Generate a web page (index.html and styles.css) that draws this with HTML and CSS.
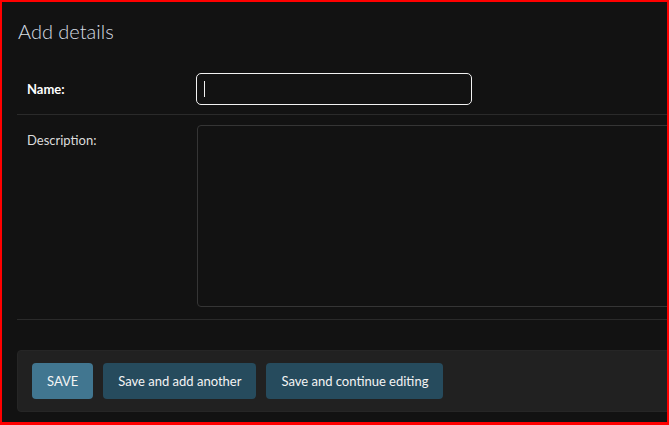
FILE: index.html
```html
<!DOCTYPE html>
<html lang="en">
<head>
<meta charset="utf-8">
<title>Add details</title>
<link rel="stylesheet" href="styles.css">
</head>
<body>
<div class="frame">
  <div class="content">
    <h1 class="title">Add details</h1>
    <form class="form">
      <fieldset class="module">
        <div class="form-row">
          <label class="required" for="id_name">Name:</label>
          <div class="input-wrap">
            <input class="name-input" type="text" id="id_name">
            <span class="caret"></span>
          </div>
        </div>
        <div class="form-row">
          <label for="id_description">Description:</label>
          <textarea class="desc-input" id="id_description"></textarea>
        </div>
      </fieldset>
      <div class="submit-row">
        <button type="button" class="btn btn-default">SAVE</button>
        <button type="button" class="btn">Save and add another</button>
        <button type="button" class="btn">Save and continue editing</button>
      </div>
    </form>
  </div>
</div>
</body>
</html>
```

FILE: styles.css
```css
* { box-sizing: border-box; }
html, body {
  margin: 0;
  padding: 0;
  background: #121212;
  overflow: hidden;
}
body {
  font-family: "Segoe UI", Lato, "Open Sans", sans-serif;
  font-size: 13px;
  color: #eeeeee;
}
.frame {
  width: 669px;
  height: 425px;
  border: 2px solid #ff0000;
  border-bottom-width: 3px;
  overflow: hidden;
  background: #121212;
}
.content {
  padding: 0 0 0 15px;
  width: 1000px;
}
.title {
  margin: 0;
  padding: 16px 0 0 1px;
  height: 60px;
  font-size: 20px;
  font-weight: 300;
  line-height: 26px;
  color: #d6dde2;
}
.module {
  margin: 0;
  padding: 0;
  border: 0;
}
.form-row {
  display: flex;
  align-items: flex-start;
  padding: 10px 10px;
  border-bottom: 1px solid #2a2a2a;
}
.form-row:last-child { padding-bottom: 12px; }
.form-row label {
  width: 170px;
  flex: 0 0 170px;
  padding-right: 10px;
  line-height: 16px;
  color: #dcdcdc;
}
.form-row label.required { font-weight: 700; color: #ffffff; margin-top: 9px; }
.form-row:last-child label { margin-top: 7px; }
.input-wrap {
  position: relative;
  margin-left: -1px;
  margin-top: 1px;
  margin-bottom: -1px;
}
.name-input {
  display: block;
  width: 276px;
  height: 32px;
  background: #121212;
  border: 1.5px solid #f2f2f2;
  border-radius: 5px;
  color: #eee;
  padding: 4px 7px;
  font: inherit;
  outline: none;
}
.caret {
  position: absolute;
  left: 8px;
  top: 8px;
  width: 1px;
  height: 16px;
  background: #f0f0f0;
}
.desc-input {
  display: block;
  width: 600px;
  height: 182px;
  background: #121212;
  border: 1px solid #353535;
  border-radius: 4px;
  color: #eee;
  resize: none;
  font: inherit;
  outline: none;
}
.submit-row {
  margin-top: 30px;
  display: flex;
  gap: 10px;
  padding: 12px 14px;
  height: 62px;
  background: #212121;
  border: 1px solid #262626;
  border-radius: 4px;
}
.btn {
  height: 36px;
  padding: 0 15px;
  border: 0;
  border-radius: 4px;
  background: #264b5d;
  color: #f4f4f4;
  font: inherit;
  font-size: 13px;
  cursor: pointer;
}
.btn-default { background: #417690; }
```
